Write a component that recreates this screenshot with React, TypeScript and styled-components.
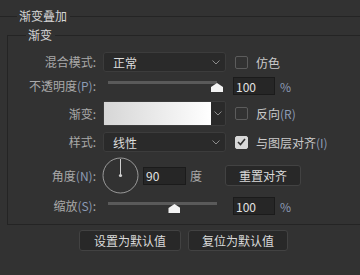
import styled, { createGlobalStyle } from "styled-components";

const LINE = "#242424";

const GlobalStyle = createGlobalStyle`
  html, body {
    margin: 0;
    background: #323232;
  }
  body {
    font-family: "Noto Sans CJK SC", "DejaVu Sans", sans-serif;
    font-size: 12px;
    color: #c8c8c8;
  }
`;

const Panel = styled.div`
  width: 360px;
  height: 275px;
  box-sizing: border-box;
  padding-top: 8px;
  overflow: hidden;
  background: #323232;
`;

const Heading = styled.div<{ $lead: number; $h: number }>`
  display: flex;
  align-items: center;
  height: ${(p) => p.$h}px;
  line-height: ${(p) => p.$h}px;
  color: #d6d6d6;
  white-space: nowrap;

  &::before {
    content: "";
    width: ${(p) => p.$lead}px;
    height: 1px;
    background: ${LINE};
  }
  &::after {
    content: "";
    flex: 1;
    height: 1px;
    background: ${LINE};
  }

  span {
    padding: 0 3px 0 2px;
  }
`;

const Group = styled.section`
  display: flex;
  flex-direction: column;
  margin: 11px 0 0 7px;
  padding-bottom: 9px;
  border-left: 1px solid ${LINE};
  border-bottom: 1px solid ${LINE};
`;

const GroupHeading = styled(Heading)`
  margin-top: -7px;
`;

const Row = styled.div<{ $top: number; $h: number }>`
  display: grid;
  grid-template-columns: 88px 123px auto;
  column-gap: 7px;
  align-items: center;
  height: ${(p) => p.$h}px;
  margin-top: ${(p) => p.$top}px;
`;

const Label = styled.div`
  text-align: right;
  color: #a9a9a9;
  white-space: nowrap;
  line-height: 14px;
`;

const Key = styled.span`
  color: #8c9bb4;
`;

const Select = styled.div`
  display: flex;
  align-items: center;
  justify-content: space-between;
  height: 20px;
  box-sizing: border-box;
  padding: 0 5px 0 9px;
  background: #2a2a2a;
  border: 1px solid #3c3c3c;
  border-radius: 3px;
  color: #dcdcdc;
`;

const Chevron = () => (
  <svg width="8" height="5" viewBox="0 0 8 5">
    <polyline points="0.5,0.5 4,4 7.5,0.5" fill="none" stroke="#8c8c8c" strokeWidth="1" />
  </svg>
);

const Check = styled.label`
  display: flex;
  align-items: center;
  gap: 8px;
  margin-left: 2px;
  color: #cacaca;
  white-space: nowrap;
`;

const Box = styled.span<{ $on?: boolean }>`
  display: inline-flex;
  align-items: center;
  justify-content: center;
  width: 13px;
  height: 13px;
  box-sizing: border-box;
  border: 1px solid ${(p) => (p.$on ? "#d8d8d8" : "#5c5c5c")};
  border-radius: 2px;
  background: ${(p) => (p.$on ? "#d8d8d8" : "transparent")};
`;

function CheckBox({ on, children }: { on?: boolean; children: React.ReactNode }) {
  return (
    <Check>
      <Box $on={on}>
        {on && (
          <svg width="9" height="8" viewBox="0 0 9 8">
            <polyline points="1,4 3.5,6.5 8,1" fill="none" stroke="#303030" strokeWidth="1.6" />
          </svg>
        )}
      </Box>
      <span>{children}</span>
    </Check>
  );
}

const Slider = styled.div<{ $top: number }>`
  position: relative;
  align-self: start;
  width: 109px;
  height: 12px;
  margin: ${(p) => p.$top}px 0 0 5px;
`;

const Track = styled.div`
  height: 3px;
  background: #5a5a5a;
`;

const Thumb = styled.div`
  position: absolute;
  top: 2px;
  width: 12px;
  height: 9px;
  margin-left: -6px;
  background: #f2f2f2;
  clip-path: polygon(50% 0, 100% 45%, 100% 100%, 0 100%, 0 45%);
`;

function Range({ pct, top }: { pct: number; top: number }) {
  return (
    <Slider $top={top}>
      <Track />
      <Thumb style={{ left: `${pct}%` }} />
    </Slider>
  );
}

const Field = styled.div<{ $w: number }>`
  display: flex;
  align-items: center;
  width: ${(p) => p.$w}px;
  height: 18px;
  box-sizing: border-box;
  padding-left: 2px;
  background: #262626;
  border: 1px solid #1b1b1b;
  color: #e2e2e2;
`;

const Unit = styled.span`
  color: #8c9bb4;
  margin-left: 5px;
`;

const Numeric = styled.div`
  display: flex;
  align-items: center;
`;

const Gradient = styled.div`
  display: flex;
  height: 25px;
  box-sizing: border-box;
  border: 1px solid #3c3c3c;
  border-radius: 2px;
  background: #2a2a2a;
`;

const Swatch = styled.div`
  flex: 1;
  background: linear-gradient(to right, #d6d6d6, #ffffff);
`;

const GradientArrow = styled.div`
  display: flex;
  align-items: center;
  justify-content: center;
  width: 14px;
`;

const AngleControls = styled.div`
  grid-column: 2 / 4;
  display: flex;
  align-items: center;
  margin-left: -1px;
`;

const Dial = styled.svg`
  flex: none;
  display: block;
`;

const AngleField = styled(Field)`
  margin-left: 4px;
`;

const Degree = styled.span`
  margin-left: 4px;
  color: #a9a9a9;
`;

const Button = styled.button<{ $w: number }>`
  width: ${(p) => p.$w}px;
  height: 21px;
  padding: 0;
  box-sizing: border-box;
  font: inherit;
  color: #dadada;
  background: #282828;
  border: 1px solid #424242;
  border-radius: 3px;
`;

const ResetAlign = styled(Button)`
  margin-left: 23px;
`;

const Footer = styled.div`
  display: flex;
  gap: 7px;
  margin: 5px 0 0 79px;
`;

export default function App() {
  return (
    <>
      <GlobalStyle />
      <Panel>
        <Heading $lead={17} $h={16}>
          <span>渐变叠加</span>
        </Heading>
        <Group>
          <GroupHeading $lead={18} $h={14}>
            <span>渐变</span>
          </GroupHeading>

          <Row $top={10} $h={20}>
            <Label>混合模式:</Label>
            <Select>
              正常
              <Chevron />
            </Select>
            <CheckBox>仿色</CheckBox>
          </Row>

          <Row $top={5} $h={18}>
            <Label>
              不透明度<Key>(P)</Key>:
            </Label>
            <Range pct={100} top={4} />
            <Numeric>
              <Field $w={42}>100</Field>
              <Unit>%</Unit>
            </Numeric>
          </Row>

          <Row $top={6} $h={25}>
            <Label>渐变:</Label>
            <Gradient>
              <Swatch />
              <GradientArrow>
                <Chevron />
              </GradientArrow>
            </Gradient>
            <CheckBox>
              反向<Key>(R)</Key>
            </CheckBox>
          </Row>

          <Row $top={6} $h={20}>
            <Label>样式:</Label>
            <Select>
              线性
              <Chevron />
            </Select>
            <CheckBox on>
              与图层对齐<Key>(I)</Key>
            </CheckBox>
          </Row>

          <Row $top={5} $h={37}>
            <Label>
              角度<Key>(N)</Key>:
            </Label>
            <AngleControls>
              <Dial width="37" height="37" viewBox="0 0 37 37">
                <circle cx="18.5" cy="18.5" r="17.5" fill="none" stroke="#9a9a9a" strokeWidth="1" />
                <line x1="18.5" y1="18.5" x2="18.5" y2="2" stroke="#cfcfcf" strokeWidth="1" />
                <circle cx="18.5" cy="18.5" r="1.6" fill="#cfcfcf" />
              </Dial>
              <AngleField $w={43}>90</AngleField>
              <Degree>度</Degree>
              <ResetAlign $w={76}>重置对齐</ResetAlign>
            </AngleControls>
          </Row>

          <Row $top={3} $h={18}>
            <Label>
              缩放<Key>(S)</Key>:
            </Label>
            <Range pct={61} top={5} />
            <Numeric>
              <Field $w={42}>100</Field>
              <Unit>%</Unit>
            </Numeric>
          </Row>
        </Group>
        <Footer>
          <Button $w={102}>设置为默认值</Button>
          <Button $w={100}>复位为默认值</Button>
        </Footer>
      </Panel>
    </>
  );
}
